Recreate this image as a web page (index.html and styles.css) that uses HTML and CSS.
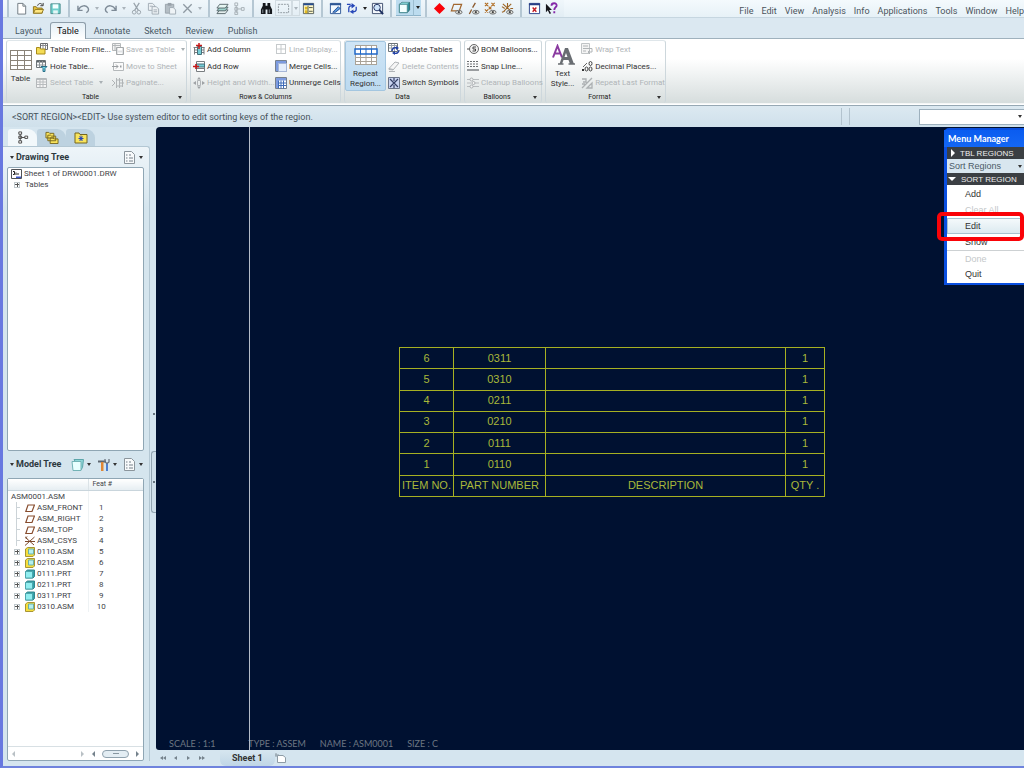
FILE: index.html
```
<!DOCTYPE html>
<html lang="en">
<head>
    <meta charset="UTF-8">
    <meta name="viewport" content="width=device-width, initial-scale=1.0">
    <title>DRW0001 - Drawing</title>
    <link rel="stylesheet" href="styles.css">
</head>
<body>
    <svg class="sprite">
        <!-- toolbar icons, 14x14 -->
        <symbol id="t-new" viewBox="0 0 14 14"><path d="M3 1.5h5.500l3 3v8.500H3z" fill="#fff" stroke="#6d7880"/><path d="M8.500 1.500v3h3" fill="none" stroke="#6d7880"/></symbol>
        <symbol id="t-open" viewBox="0 0 14 14"><path d="M1.500 12V5h3l1 1.500H11V12z" fill="#e8c23a" stroke="#8a7420"/><path d="M1.500 12l2-4h9l-2 4z" fill="#ffe680" stroke="#8a7420"/><path d="M6 4c1-3 4-3 5-1M12 1v3H9" fill="none" stroke="#333"/></symbol>
        <symbol id="t-save" viewBox="0 0 14 14"><path d="M2 2h10v10.500H2z" fill="#6fd0cc" stroke="#4b8b8e"/><path d="M4 2.500h6V7H4z" fill="#f4ffff"/><path d="M4.500 9h5v3.500h-5z" fill="#e5f6f6"/></symbol>
        <symbol id="t-undo" viewBox="0 0 14 14"><path d="M1 4v5h5M1.500 8.500C4 3 10 3 12 6.500c1 2 0 4-2 5" fill="none" stroke="#7d8a96" stroke-width="1.500"/></symbol>
        <symbol id="t-redo" viewBox="0 0 14 14"><path d="M13 4v5H8M12.500 8.500C10 3 4 3 2 6.500c-1 2 0 4 2 5" fill="none" stroke="#7d8a96" stroke-width="1.500"/></symbol>
        <symbol id="t-cut" viewBox="0 0 14 14"><path d="M4 1l5 8M10 1L5 9" stroke="#98a2aa" stroke-width="1.300"/><circle cx="4.500" cy="11" r="2" fill="none" stroke="#98a2aa"/><circle cx="9.500" cy="11" r="2" fill="none" stroke="#98a2aa"/></symbol>
        <symbol id="t-copy" viewBox="0 0 14 14"><path d="M1.500 1.500H6L8 3.500V9H1.500z" fill="#eef3f6" stroke="#a0abb3"/><path d="M5.500 5H10l2.500 2.500V13h-7z" fill="#eef3f6" stroke="#a0abb3"/><path d="M7 8.500h4M7 10.500h4M3 4.500h3" stroke="#a0abb3"/></symbol>
        <symbol id="t-paste" viewBox="0 0 14 14"><path d="M1.500 2.500h9V12h-9z" fill="#b4bec5" stroke="#98a2aa"/><path d="M4 1h4v3H4z" fill="#98a2aa"/><path d="M6 6h4l2.500 2.500V13H6z" fill="#eef3f6" stroke="#a0abb3"/></symbol>
        <symbol id="t-x" viewBox="0 0 14 14"><path d="M2.500 2.500l9 9M11.500 2.500l-9 9" stroke="#8e99a2" stroke-width="1.400"/></symbol>
        <symbol id="t-layers" viewBox="0 0 14 14"><path d="M4 8.500h9l-3 4H1z" fill="#e5eeee" stroke="#58676b"/><path d="M4 5.500h9l-3 4H1z" fill="#9ed4cd" stroke="#58676b"/><path d="M4 2.500h9l-3 4H1z" fill="#e5f6f2" stroke="#58676b"/></symbol>
        <symbol id="t-tree" viewBox="0 0 14 14"><path d="M2 1h3v3H2zM2 6h3v3H2zM2 10.500h3v3H2zM9 6h3v3H9zM3.500 4v8M5 7.500h4" fill="none" stroke="#a6b0b6"/></symbol>
        <symbol id="t-bino" viewBox="0 0 14 14"><path d="M3 1h3v3h2V1h3v3l2 4v5H8V8H6v5H1V8l2-4z" fill="#15181c"/><path d="M3 8v4M10 8v4" stroke="#8b949c"/></symbol>
        <symbol id="t-select" viewBox="0 0 14 14"><path d="M1.500 2.500h11v9h-11z" fill="none" stroke="#8d969d" stroke-dasharray="2 1"/></symbol>
        <symbol id="t-find" viewBox="0 0 14 14"><path d="M1.500 1.500h11v11h-11z" fill="#fff8c8" stroke="#57605c"/><path d="M1.500 2.500h11" stroke="#254c93" stroke-width="2"/><path d="M3 5h3v3H3zM3 9h3v3H3z" fill="#e0b920"/><path d="M7.500 6h4M7.500 10h4M6.500 4v8" stroke="#4d5347"/></symbol>
        <symbol id="t-repaint" viewBox="0 0 14 14"><path d="M1.500 1.500h11v11h-11z" fill="#f4faff" stroke="#2d5695"/><path d="M1 2.500h12" stroke="#2d5695" stroke-width="2"/><path d="M4 11l6-6 2 2-5 4z" fill="#5a9bdd" stroke="#254c93"/></symbol>
        <symbol id="t-refit" viewBox="0 0 14 14"><path d="M1 2.500h4M3 11V7c0-2 2-3 4-3M11 5v3c0 2-2 2.500-4 2.500" fill="none" stroke="#2747b8" stroke-width="1.400"/><path d="M6 1l4 3-4 3zM8 8l-4 2.500L8 13z" fill="#2747b8"/></symbol>
        <symbol id="t-zoom" viewBox="0 0 14 14"><path d="M1.500 1.500h11v11h-11z" fill="#f4f8fc" stroke="#3c4c6c"/><circle cx="6.500" cy="6" r="3.500" fill="#cfe5fb" stroke="#1d2f60"/><path d="M9 8.500l4 4.500" stroke="#1d2f60" stroke-width="2"/></symbol>
        <symbol id="t-cube" viewBox="0 0 14 14"><path d="M1.500 3.500l3-2h8v8l-2.500 3h-8.500z" fill="#2c8d98" stroke="#32686f"/><path d="M1.500 3.500h8.500v9H1.500z" fill="#f3ffff" stroke="#4b8e94"/><path d="M2 3l3-1.500h7L10 3z" fill="#9ae4e4"/></symbol>
        <symbol id="t-red" viewBox="0 0 14 14"><path d="M7 1l6 6-6 6-6-6z" fill="#fa0308"/></symbol>
        <symbol id="eye" viewBox="0 0 14 14"><ellipse cx="9.500" cy="11" rx="3.500" ry="2" fill="#e8e8e2" stroke="#66686a"/><circle cx="9.500" cy="11" r="1.200" fill="#444"/></symbol>
        <symbol id="t-plane" viewBox="0 0 14 14"><path d="M4 2.500h8.500L10 9.500H1.500z" fill="none" stroke="#a2672f" stroke-width="1.300"/><use href="#eye"/></symbol>
        <symbol id="t-axis" viewBox="0 0 14 14"><path d="M9 1L6 6M5 8l-2.500 5" stroke="#8c5a2d" stroke-width="1.400"/><use href="#eye"/></symbol>
        <symbol id="t-points" viewBox="0 0 14 14"><path d="M1 1l3.500 3.500M4.500 1L1 4.500M8 1l3.500 3.500M11.500 1L8 4.500M1 8l3.500 3.500M4.500 8L1 11.500M5 5l3 3M8 5L5 8" stroke="#b06c22" stroke-width="1.200"/><use href="#eye"/></symbol>
        <symbol id="t-csys" viewBox="0 0 14 14"><path d="M2 2l9 8M11 2l-8 8M7 1v5M1 5l3 2M10 7h3M1 11l3-1" stroke="#9b6425" stroke-width="1.200"/><use href="#eye"/></symbol>
        <symbol id="t-close" viewBox="0 0 14 14"><path d="M1.500 1.500h11v11h-11z" fill="#fff" stroke="#273f87"/><path d="M1 2.500h12" stroke="#273f87" stroke-width="2"/><path d="M5 6l4 4.500M9 6l-4 4.500" stroke="#c01a22" stroke-width="1.500"/></symbol>
        <symbol id="t-help" viewBox="0 0 14 14"><path d="M1 2v9l2-2 2 4 1.500-1-2-3.500h3z" fill="#16161c"/><path d="M7 4c0-3.500 6-3.500 5.500 0C12 6 10 6 10 8.500M10 10v2" fill="none" stroke="#8427a8" stroke-width="2"/></symbol>
        <!-- ribbon icons, 12x12 -->
        <symbol id="r-grid" viewBox="0 0 24 22"><path d="M1 1h22v20H1z" fill="#fff"/><path d="M1.500 1v20M8.500 1v20M15.500 1v20M22.500 1v20M1 1.500h22M1 6.500h22M1 11.500h22M1 16.500h22M1 20.500h22" stroke="#8a8378"/></symbol>
        <symbol id="r-file" viewBox="0 0 12 12"><path d="M4.500.5h7v6h-7z" fill="#fff" stroke="#6a6c70"/><path d="M5 2.500h6M7 1v5M9.500 1v5" stroke="#8a8c90"/><path d="M.5 4.500h3l1 1.500H9v5H.5z" fill="#f4dc55" stroke="#a98a18"/></symbol>
        <symbol id="r-hole" viewBox="0 0 12 12"><path d="M.5.5h9v7h-9z" fill="#fff" stroke="#6d7478"/><path d="M1 1.500h8" stroke="#5d6468" stroke-width="2"/><path d="M1 5h8M3.500 1v6M6.500 1v6" stroke="#8d9498"/><path d="M5 6.500h6L9 8.500v3H7v-3z" fill="#6fd5e8" stroke="#2b6f87"/></symbol>
        <symbol id="r-table-off" viewBox="0 0 12 12"><path d="M.5 1.500h10v9H.5z" fill="#f4f4f4" stroke="#b4b8ba"/><path d="M1 2.500h9M1 5h9M1 7.500h9M4 2v8M7 2v8" stroke="#b8bcbe"/></symbol>
        <symbol id="r-saveas" viewBox="0 0 12 12"><path d="M.5.5h8v7h-8z" fill="#f4f4f4" stroke="#b4b8ba"/><path d="M1 2.500h8M3 1v6" stroke="#b4b8ba"/><path d="M4.500 4.500h7v7h-7z" fill="#e0e2e4" stroke="#a4a8aa"/><path d="M6 5h4v2.500H6zM6 9.500h4V11H6z" fill="#fff"/></symbol>
        <symbol id="r-move" viewBox="0 0 12 12"><path d="M1.500 2.500h10v8h-10z" fill="#fafafa" stroke="#b4b8ba"/><path d="M0 6.500h6M4 4.500l2 2-2 2" fill="none" stroke="#999da0"/><path d="M8 6.500h1.500" stroke="#999da0" stroke-width="2"/></symbol>
        <symbol id="r-paginate" viewBox="0 0 12 12"><path d="M4.500 1v10M7.500 1v10M5 3h6M8 6h4M5 9h6M10.500 2v8M0 3l3 3-3 3" fill="none" stroke="#b0b4b6"/></symbol>
        <symbol id="r-addcol" viewBox="0 0 12 12"><path d="M.5 4.500h11M1 7h10M1 9.500h10M1.500 4v7.500M11 4v7.500" stroke="#787d80"/><path d="M4.500 3.500h4v8h-4z" fill="#77cdd6" stroke="#46707a"/><path d="M6 0v6M3 2.500h6" stroke="#c61a1a" stroke-width="1.500"/></symbol>
        <symbol id="r-addrow" viewBox="0 0 12 12"><path d="M3.500 1.500h8v10h-8zM4 8.500h8" fill="#fff" stroke="#787d80"/><path d="M3.500 4h8v3h-8z" fill="#77cdd6" stroke="#46707a"/><path d="M0 6.500h6M3 4v5" stroke="#c61a1a" stroke-width="1.600"/></symbol>
        <symbol id="r-size" viewBox="0 0 12 12"><path d="M4.500 3.500h3v5h-3z" fill="none" stroke="#b0b4b7"/><path d="M0 6l3-2v4zM12 6L9 4v4zM6 0l2 2.500H4zM6 12l2-2.500H4z" fill="#9ea2a5"/></symbol>
        <symbol id="r-line" viewBox="0 0 12 12"><path d="M1 1.500h10M1 6h10M1 10.500h10M1.500 1v10M6 1v10M10.500 1v10" stroke="#c6cacc"/></symbol>
        <symbol id="r-merge" viewBox="0 0 12 12"><path d="M.5.5h11v11H.5z" fill="#fff" stroke="#76808d"/><path d="M1 1h10v2.500H3.500V11H1z" fill="#7d9be0"/><path d="M3.500 3.500h8v8h-8z" fill="#e5eefb" stroke="#a6b6d7"/></symbol>
        <symbol id="r-unmerge" viewBox="0 0 12 12"><path d="M.5.5h11v11H.5z" fill="#fff" stroke="#76808d"/><path d="M1 1h10v2.500H3.500V11H1z" fill="#7d9be0"/><path d="M3.500 6h8M3.500 8.500h8M3.500 3.500v8M6 3.500v8M8.500 3.500v8" stroke="#3f6cb8"/></symbol>
        <symbol id="r-repeat" viewBox="0 0 24 22"><path d="M1 1h22v20H1z" fill="#fff"/><path d="M1.500 1v20M6.500 1v20M12 1v20M17.500 1v20M22.500 1v20M1 1.500h22M1 13.500h22M1 17.500h22M1 20.500h22" stroke="#a9a297"/><path d="M1 5h22v5H1z" fill="#fff" stroke="#2068c8" stroke-width="1.500"/><path d="M6.500 5v5M12 5v5M17.500 5v5" stroke="#2068c8"/></symbol>
        <symbol id="r-update" viewBox="0 0 12 12"><path d="M.5.500h9v8h-9z" fill="#fff" stroke="#6d7478"/><path d="M1 2.500h8M1 5h8M3.500 1v7M6.500 1v7" stroke="#9da4a8"/><path d="M4 8c0-3 3-4 5-3M11 7c0 3-3 4-5 3" fill="none" stroke="#2140a5" stroke-width="1.400"/><path d="M8 3l3 2-3 2zM7 8l-3 2 3 2z" fill="#2140a5"/></symbol>
        <symbol id="r-erase" viewBox="0 0 12 12"><path d="M1 8.500l6-6.500 4 1-6 7-4-.500zM1 8.500l4 1M1 11.500h6" fill="#f6f6f6" stroke="#b0b4b7"/></symbol>
        <symbol id="r-switch" viewBox="0 0 12 12"><path d="M.5.500h11v11H.5z" fill="#c9d4f0" stroke="#6b7588"/><path d="M2 2l8 8M10 2l-8 8M6 1v3M6 8v3" stroke="#343f65" stroke-width="1.200"/></symbol>
        <symbol id="r-bom" viewBox="0 0 12 12"><path d="M0 6h3" stroke="#444"/><circle cx="7" cy="6" r="4.500" fill="#f2f2f2" stroke="#666"/><path d="M9 4H6v2h2.500v2H5.500" fill="none" stroke="#444"/></symbol>
        <symbol id="r-snap" viewBox="0 0 12 12"><path d="M0 1.500h12M0 4h12M0 6.500h12" stroke="#6a6d70" stroke-dasharray="2 1"/><path d="M0 10h12" stroke="#9a9da0" stroke-width="2"/></symbol>
        <symbol id="r-clean" viewBox="0 0 12 12"><path d="M0 2.500h4M6 2.500h6M0 6h4M8 6h4M0 9.500h4M6 9.500h6" stroke="#b8bcbf"/><circle cx="4.500" cy="2.500" r="1.500" fill="#f4f4f4" stroke="#acb0b3"/><circle cx="6.500" cy="6" r="1.500" fill="#f4f4f4" stroke="#acb0b3"/><circle cx="4.500" cy="9.500" r="1.500" fill="#f4f4f4" stroke="#acb0b3"/></symbol>
        <symbol id="r-style" viewBox="0 0 24 22"><path d="M2 13.500L6.500 2 11 13.500M3.500 9.500h6" fill="none" stroke="#8a3ba0" stroke-width="2"/><path d="M14 4h3l6 16h-4l-1.500-4h-5L11 20H8.500zM13.500 13h3L15 9z" fill="#696d72"/><path d="M7 20h5.500M17.500 20H24" stroke="#696d72" stroke-width="1.500"/></symbol>
        <symbol id="r-wrap" viewBox="0 0 12 12"><path d="M.5.500h8v10h-8z" fill="#f4f4f4" stroke="#c0c4c6"/><path d="M2 3h5M2 5.500h9V9H7M9 7L7 9l2 2M2 8h3" fill="none" stroke="#b0b4b6"/></symbol>
        <symbol id="r-decimal" viewBox="0 0 12 12"><path d="M1 9h2v2H1z" fill="#333"/><ellipse cx="5.500" cy="9" rx="1.500" ry="2" fill="none" stroke="#444"/><ellipse cx="9.500" cy="9" rx="1.500" ry="2" fill="none" stroke="#444"/><ellipse cx="9.500" cy="3.500" rx="1.500" ry="2" fill="none" stroke="#444"/><path d="M2 7l4-4" stroke="#666"/></symbol>
        <symbol id="r-last" viewBox="0 0 12 12"><path d="M1 11L11 1M1 2h4v3H2M6 11l5-5v5zM1 7h3" fill="none" stroke="#acb0b2" stroke-width="1.300"/></symbol>
        <!-- tree icons -->
        <symbol id="p-tree" viewBox="0 0 12 14"><path d="M1.500 1h3v2.500h-3zM1.500 5.500h3V8h-3zM1.500 10.500h3V13h-3zM8 5.500h3V8H8zM3 3.500v7M4.500 7H8" fill="#fff" stroke="#444"/></symbol>
        <symbol id="p-folders" viewBox="0 0 14 14"><path d="M.5 1.500h3l1 1H9v5H.5zM2.500 4.500h3l1 1H11v5H2.500zM5 7.500h3l1 1h4.500v5H5z" fill="#f9e45c" stroke="#77661c"/></symbol>
        <symbol id="p-fav" viewBox="0 0 14 12"><path d="M1 1.500h4l1 1.500h7v8.500H1z" fill="#f9e45c" stroke="#77661c"/><path d="M7 4v5.500M4.500 7h5M5.500 5l3 4M8.500 5l-3 4" stroke="#2745b5"/></symbol>
        <symbol id="p-list" viewBox="0 0 13 13"><path d="M1.500.500h7l3 3v9h-10z" fill="#f8fafb" stroke="#8b959c"/><path d="M3 4h1.500M3 7h1.500M3 10h1.500M6 4h2M6 7h4M6 10h4" stroke="#74808a"/></symbol>
        <symbol id="p-show" viewBox="0 0 13 13"><path d="M3 1.500h9.500l-1 8-2 3z" fill="#8fd6d8" stroke="#5ba5aa"/><path d="M1 3.500h9v9H2z" fill="#e9ffff" stroke="#73b3b6"/></symbol>
        <symbol id="p-tools" viewBox="0 0 13 13"><path d="M1 2.500h8v2H1z" fill="#5d6670"/><path d="M4 4h2.500v9H4z" fill="#df8735"/><path d="M9 5h2v8H9z" fill="#4b7ed0"/><path d="M8 1v3l2 1.500L12 4V1" fill="none" stroke="#6b7480" stroke-width="1.300"/></symbol>
        <symbol id="p-drw" viewBox="0 0 11 10"><path d="M.5.500h10v9H.5z" fill="#fff" stroke="#505256"/><path d="M2 2.500h1.500v3H2M5 3.500v2.500M7 4v2" fill="none" stroke="#222"/><path d="M5 7.500h5v1.500H5z" fill="#3d56c8"/></symbol>
        <symbol id="p-plane" viewBox="0 0 10 10"><path d="M3 2h6.500L7 8.500H.8z" fill="#fff" stroke="#874c2d" stroke-width="1.200"/></symbol>
        <symbol id="p-csys" viewBox="0 0 10 10"><path d="M0 9.500L9.500 1M1 2l8 7M0 5.500h10M0 .5l2 2M2 .500l-2 2" stroke="#7c4a2d"/></symbol>
        <symbol id="p-asm" viewBox="0 0 10 10"><path d="M.5 2l2-1.500h7V8L8 9.500H.5z" fill="#f6df3c" stroke="#a89534"/><path d="M3.500 2h5v5h-5z" fill="#b4efee" stroke="#6bb0a8"/></symbol>
        <symbol id="p-prt" viewBox="0 0 10 10"><path d="M.5 2.500l2-1.500h7v6.500L8 9H.5z" fill="#2fa3ab" stroke="#37868c"/><path d="M.5 2.500h7V9h-7z" fill="#91eef0" stroke="#4da6ac"/></symbol>
        <symbol id="p-sheet" viewBox="0 0 12 10"><path d="M2.500 2.500H8l2.500 2v5h-8z" fill="#fff" stroke="#8e9ca6"/><path d="M1 0v4M0 2h4" stroke="#8e9ca6"/></symbol>
    </svg>

    <div class="app">
        <header class="topbar">
            <div class="toolbar">
                <div class="tool-group">
                    <button aria-label="New"><svg><use href="#t-new"/></svg></button>
                    <button aria-label="Open"><svg><use href="#t-open"/></svg></button>
                    <button aria-label="Save"><svg><use href="#t-save"/></svg></button>
                </div>
                <div class="tool-group">
                    <button class="wide" aria-label="Undo"><svg><use href="#t-undo"/></svg></button>
                    <button class="drop off" aria-label="Undo list"></button>
                    <button class="wide" aria-label="Redo"><svg><use href="#t-redo"/></svg></button>
                    <button class="drop off" aria-label="Redo list"></button>
                    <button aria-label="Cut"><svg><use href="#t-cut"/></svg></button>
                    <button aria-label="Copy"><svg><use href="#t-copy"/></svg></button>
                    <button aria-label="Paste"><svg><use href="#t-paste"/></svg></button>
                    <button aria-label="Delete"><svg><use href="#t-x"/></svg></button>
                    <button class="drop off" aria-label="Delete options"></button>
                </div>
                <div class="tool-group">
                    <button aria-label="Layers"><svg><use href="#t-layers"/></svg></button>
                    <button aria-label="Structure"><svg><use href="#t-tree"/></svg></button>
                </div>
                <div class="tool-group">
                    <button aria-label="Find"><svg><use href="#t-bino"/></svg></button>
                    <button class="boxed" aria-label="Select"><svg><use href="#t-select"/></svg></button>
                    <button class="drop off boxed" aria-label="Select options"></button>
                    <button aria-label="Search tool"><svg><use href="#t-find"/></svg></button>
                </div>
                <div class="tool-group">
                    <button aria-label="Repaint"><svg><use href="#t-repaint"/></svg></button>
                    <button aria-label="Regenerate"><svg><use href="#t-refit"/></svg></button>
                    <button class="drop" aria-label="Regenerate options"></button>
                    <button aria-label="Zoom"><svg><use href="#t-zoom"/></svg></button>
                </div>
                <div class="tool-group">
                    <button class="active" aria-label="Display style"><svg><use href="#t-cube"/></svg></button>
                    <button class="drop active" aria-label="Display style options"></button>
                </div>
                <div class="tool-group">
                    <button aria-label="Datum"><svg><use href="#t-red"/></svg></button>
                    <button aria-label="Planes"><svg><use href="#t-plane"/></svg></button>
                    <button aria-label="Axes"><svg><use href="#t-axis"/></svg></button>
                    <button aria-label="Points"><svg><use href="#t-points"/></svg></button>
                    <button aria-label="Coordinate systems"><svg><use href="#t-csys"/></svg></button>
                </div>
                <div class="tool-group">
                    <button aria-label="Close window"><svg><use href="#t-close"/></svg></button>
                    <button aria-label="Context help"><svg><use href="#t-help"/></svg></button>
                </div>
            </div>
            <nav class="menubar">
                <a href="#">File</a>
                <a href="#">Edit</a>
                <a href="#">View</a>
                <a href="#">Analysis</a>
                <a href="#">Info</a>
                <a href="#">Applications</a>
                <a href="#">Tools</a>
                <a href="#">Window</a>
                <a href="#">Help</a>
            </nav>
        </header>

        <nav class="tabs">
            <a href="#">Layout</a>
            <a href="#" class="current">Table</a>
            <a href="#">Annotate</a>
            <a href="#">Sketch</a>
            <a href="#">Review</a>
            <a href="#">Publish</a>
        </nav>

        <div class="ribbon">
            <section class="group g-table">
                <div class="group-body">
                    <button class="big"><svg><use href="#r-grid"/></svg>Table</button>
                    <div class="col">
                        <button><svg><use href="#r-file"/></svg>Table From File...</button>
                        <button><svg><use href="#r-hole"/></svg>Hole Table...</button>
                        <button disabled><svg><use href="#r-table-off"/></svg>Select Table<i class="arrow"></i></button>
                    </div>
                    <div class="col">
                        <button disabled><svg><use href="#r-saveas"/></svg>Save as Table<i class="arrow"></i></button>
                        <button disabled><svg><use href="#r-move"/></svg>Move to Sheet</button>
                        <button disabled><svg><use href="#r-paginate"/></svg>Paginate...</button>
                    </div>
                </div>
                <h2 class="more">Table<i class="arrow"></i></h2>
            </section>
            <section class="group g-rows">
                <div class="group-body">
                    <div class="col">
                        <button><svg><use href="#r-addcol"/></svg>Add Column</button>
                        <button><svg><use href="#r-addrow"/></svg>Add Row</button>
                        <button disabled><svg><use href="#r-size"/></svg>Height and Width...</button>
                    </div>
                    <div class="col">
                        <button disabled><svg><use href="#r-line"/></svg>Line Display...</button>
                        <button><svg><use href="#r-merge"/></svg>Merge Cells...</button>
                        <button><svg><use href="#r-unmerge"/></svg>Unmerge Cells</button>
                    </div>
                </div>
                <h2>Rows &amp; Columns</h2>
            </section>
            <section class="group g-data">
                <div class="group-body">
                    <button class="big pressed"><svg><use href="#r-repeat"/></svg>Repeat<br>Region...</button>
                    <div class="col">
                        <button><svg><use href="#r-update"/></svg>Update Tables</button>
                        <button disabled><svg><use href="#r-erase"/></svg>Delete Contents</button>
                        <button><svg><use href="#r-switch"/></svg>Switch Symbols</button>
                    </div>
                </div>
                <h2>Data</h2>
            </section>
            <section class="group g-balloons">
                <div class="group-body">
                    <div class="col">
                        <button><svg><use href="#r-bom"/></svg>BOM Balloons...</button>
                        <button><svg><use href="#r-snap"/></svg>Snap Line...</button>
                        <button disabled><svg><use href="#r-clean"/></svg>Cleanup Balloons</button>
                    </div>
                </div>
                <h2 class="more">Balloons<i class="arrow"></i></h2>
            </section>
            <section class="group g-format">
                <div class="group-body">
                    <button class="big"><svg><use href="#r-style"/></svg>Text<br>Style...</button>
                    <div class="col">
                        <button disabled><svg><use href="#r-wrap"/></svg>Wrap Text</button>
                        <button><svg><use href="#r-decimal"/></svg>Decimal Places...</button>
                        <button disabled><svg><use href="#r-last"/></svg>Repeat Last Format</button>
                    </div>
                </div>
                <h2 class="more">Format<i class="arrow"></i></h2>
            </section>
        </div>

        <div class="message-bar">
            <p>&lt;SORT REGION&gt;&lt;EDIT&gt; Use system editor to edit sorting keys of the region.</p>
            <span class="grip"></span>
            <div class="picker filter">
                <select aria-label="Selection filter"><option></option></select>
                <i class="arrow"></i>
            </div>
        </div>

        <div class="workspace">
            <aside class="sidebar">
                <div class="side-tabs">
                    <button class="current" aria-label="Model tree"><svg><use href="#p-tree"/></svg></button>
                    <button aria-label="Folder browser"><svg><use href="#p-folders"/></svg></button>
                    <button aria-label="Favorites"><svg><use href="#p-fav"/></svg></button>
                </div>
                <div class="side-panel">
                    <div class="panel-head">
                        <i class="arrow"></i>
                        <h3>Drawing Tree</h3>
                        <button aria-label="Tree settings"><svg><use href="#p-list"/></svg><i class="arrow"></i></button>
                    </div>
                    <div class="panel-box">
                        <ul class="drawing-tree">
                            <li><svg><use href="#p-drw"/></svg>Sheet 1 of DRW0001.DRW</li>
                            <li class="child"><i class="plus"></i>Tables</li>
                        </ul>
                    </div>
                    <div class="panel-head tall">
                        <i class="arrow"></i>
                        <h3>Model Tree</h3>
                        <button aria-label="Show"><svg><use href="#p-show"/></svg><i class="arrow"></i></button>
                        <button aria-label="Settings"><svg><use href="#p-tools"/></svg><i class="arrow"></i></button>
                        <button aria-label="Columns"><svg><use href="#p-list"/></svg><i class="arrow"></i></button>
                    </div>
                    <div class="panel-box">
                        <table class="model-tree">
                            <thead>
                                <tr><th></th><th>Feat #</th></tr>
                            </thead>
                            <tbody>
                                <tr><td>ASM0001.ASM</td><td></td></tr>
                                <tr><td><div class="node"><i class="leaf"></i><svg><use href="#p-plane"/></svg>ASM_FRONT</div></td><td>1</td></tr>
                                <tr><td><div class="node"><i class="leaf"></i><svg><use href="#p-plane"/></svg>ASM_RIGHT</div></td><td>2</td></tr>
                                <tr><td><div class="node"><i class="leaf"></i><svg><use href="#p-plane"/></svg>ASM_TOP</div></td><td>3</td></tr>
                                <tr><td><div class="node"><i class="leaf"></i><svg><use href="#p-csys"/></svg>ASM_CSYS</div></td><td>4</td></tr>
                                <tr><td><div class="node"><i class="plus"></i><svg><use href="#p-asm"/></svg>0110.ASM</div></td><td>5</td></tr>
                                <tr><td><div class="node"><i class="plus"></i><svg><use href="#p-asm"/></svg>0210.ASM</div></td><td>6</td></tr>
                                <tr><td><div class="node"><i class="plus"></i><svg><use href="#p-prt"/></svg>0111.PRT</div></td><td>7</td></tr>
                                <tr><td><div class="node"><i class="plus"></i><svg><use href="#p-prt"/></svg>0211.PRT</div></td><td>8</td></tr>
                                <tr><td><div class="node"><i class="plus"></i><svg><use href="#p-prt"/></svg>0311.PRT</div></td><td>9</td></tr>
                                <tr><td><div class="node"><i class="plus"></i><svg><use href="#p-asm"/></svg>0310.ASM</div></td><td>10</td></tr>
                            </tbody>
                        </table>
                        <div class="scroll-row">
                            <div class="scroll first"><i class="tri left"></i><i class="tri right"></i></div>
                            <div class="scroll"><i class="tri left"></i><span class="thumb"></span><i class="tri right"></i></div>
                        </div>
                    </div>
                </div>
            </aside>
            <div class="splitter"><span class="handle top"></span><span class="handle"></span></div>

            <main class="main">
                <div class="canvas">
                    <div class="sheet-edge"></div>
                    <table class="bom">
                        <colgroup><col class="c-item"><col class="c-part"><col><col class="c-qty"></colgroup>
                        <tbody>
                            <tr><td>6</td><td>0311</td><td></td><td>1</td></tr>
                            <tr><td>5</td><td>0310</td><td></td><td>1</td></tr>
                            <tr><td>4</td><td>0211</td><td></td><td>1</td></tr>
                            <tr><td>3</td><td>0210</td><td></td><td>1</td></tr>
                            <tr><td>2</td><td>0111</td><td></td><td>1</td></tr>
                            <tr><td>1</td><td>0110</td><td></td><td>1</td></tr>
                            <tr><th>ITEM NO.</th><th>PART NUMBER</th><th>DESCRIPTION</th><th>QTY .</th></tr>
                        </tbody>
                    </table>
                    <div class="sheet-info">
                        <span class="scale">SCALE : 1:1</span>
                        <span>TYPE : ASSEM</span>
                        <span>NAME : ASM0001</span>
                        <span>SIZE : C</span>
                    </div>

                    <div class="menu-manager">
                        <h4>Menu Manager</h4>
                        <div class="mm-head"><i class="tri right"></i>TBL REGIONS</div>
                        <div class="picker">
                            <select aria-label="Table regions"><option>Sort Regions</option></select>
                            <i class="arrow"></i>
                        </div>
                        <div class="mm-head"><i class="tri down"></i>SORT REGION</div>
                        <div class="mm-list">
                            <button>Add</button>
                            <button disabled>Clear All</button>
                            <button class="hover">Edit</button>
                            <button>Show</button>
                            <button class="ruled" disabled>Done</button>
                            <button>Quit</button>
                        </div>
                        <div class="callout"></div>
                    </div>
                </div>
                <div class="sheet-bar">
                    <button aria-label="First sheet"><i class="tri left"></i><i class="tri left"></i></button>
                    <button aria-label="Previous sheet"><i class="tri left"></i></button>
                    <button aria-label="Next sheet"><i class="tri right"></i></button>
                    <button aria-label="Last sheet"><i class="tri right"></i><i class="tri right"></i></button>
                    <a href="#" class="sheet-tab">Sheet 1</a>
                    <button aria-label="New sheet"><svg><use href="#p-sheet"/></svg></button>
                </div>
            </main>
        </div>
    </div>
</body>
</html>
```
FILE: styles.css
```
* {
    box-sizing: border-box;
}
body {
    margin: 0;
    height: 100vh;
    overflow: hidden;
    font-family: Roboto, "Liberation Sans", sans-serif;
    font-size: 8px;
    color: #333;
}
button {
    font: inherit;
    color: inherit;
    background: none;
    border: none;
    padding: 0;
    margin: 0;
}
a {
    color: inherit;
    text-decoration: none;
}
h2, h3, h4, p, ul {
    margin: 0;
    padding: 0;
}
.sprite {
    display: none;
}
.app {
    display: flex;
    flex-direction: column;
    height: 100%;
    border-left: 3px solid #6878e0;
    border-bottom: 2px solid #6f83dd;
    background: #d5e5ef;
}
.arrow {
    display: inline-block;
    flex: none;
    border: 2px solid transparent;
    border-top: 3px solid #333;
    border-bottom: none;
}
.tri {
    display: inline-block;
    flex: none;
    border: 3px solid transparent;
}
.tri.left {
    border-right-color: #75828c;
    border-left: none;
}
.tri.right {
    border-left-color: #75828c;
    border-right: none;
}
.picker {
    display: grid;
    align-items: center;
}
.picker select, .picker .arrow {
    grid-area: 1 / 1;
}
.picker .arrow {
    justify-self: end;
    margin-right: 2px;
    pointer-events: none;
}

/* top toolbar and menus */
.topbar {
    display: flex;
    justify-content: space-between;
    height: 18px;
    flex: none;
    background: linear-gradient(#f4fafd, #e7f1f7);
    border-bottom: 1px solid #c6d6e0;
}
.toolbar {
    display: flex;
    flex: none;
    padding-left: 4px;
}
.tool-group {
    display: flex;
    padding: 0 4px;
    border-left: 2px solid #b5c7d3;
    background: linear-gradient(#f0f7fb, #e2edf4);
}
.tool-group button {
    display: flex;
    align-items: center;
    justify-content: center;
    width: 17px;
    height: 16px;
}
.tool-group svg {
    width: 13px;
    height: 13px;
}
.tool-group .wide {
    width: 19px;
}
.tool-group .drop {
    width: 8px;
}
.drop::after {
    content: "";
    border: 2px solid transparent;
    border-top: 3px solid #222;
    border-bottom: none;
}
.drop.off::after {
    border-top-color: #aab4bb;
}
.tool-group .boxed {
    border: 1px solid #d2dce2;
}
.tool-group .active {
    background: #bcdcef;
    border-bottom: 1px solid #8eb4ca;
}
.tool-group .drop.active {
    border-left: 1px solid #9bbdd0;
}
.menubar {
    display: flex;
    gap: 8px;
    padding-top: 5px;
    font-size: 9px;
    line-height: 12px;
    color: #4a545c;
}

/* ribbon */
.tabs {
    display: flex;
    align-items: flex-end;
    flex: none;
    height: 21px;
    padding-left: 5px;
    font-size: 9px;
    line-height: 16px;
    color: #4a5a66;
    background: #dbe8f1;
    border-bottom: 1px solid #9fb1bd;
}
.tabs a {
    padding: 0 6px;
    margin-bottom: -1px;
    border: 1px solid transparent;
    border-bottom: none;
}
.tabs .current {
    margin: 0 1px -1px;
    color: #111;
    background: linear-gradient(#e4eff6, #fff);
    border-color: #8e9eaa;
    border-radius: 3px 3px 0 0;
}
.ribbon {
    display: flex;
    gap: 3px;
    flex: none;
    height: 67px;
    padding: 1px 3px 2px;
    background: linear-gradient(#fff 30%, #d6dddd 97%, #fff 98%);
    border-bottom: 1px solid #96a8b4;
}
.group {
    display: flex;
    flex-direction: column;
    border: 1px solid #cdd7dc;
    border-top-color: #dfe6ea;
    border-radius: 3px;
    border-bottom: none;
}
.group-body {
    display: flex;
    height: 50px;
}
.group h2 {
    position: relative;
    font-size: 7px;
    font-weight: normal;
    line-height: 12px;
    text-align: center;
    color: #222;
}
.group .more {
    padding-right: 12px;
}
.group h2 .arrow {
    position: absolute;
    right: 4px;
    top: 5px;
}
.g-table {
    width: 181px;
}
.g-rows {
    width: 151px;
}
.g-data {
    width: 117px;
}
.g-balloons {
    width: 78px;
}
.g-format {
    width: 121px;
}
.col {
    display: flex;
    flex-direction: column;
    padding-left: 2px;
    white-space: nowrap;
}
.g-table .col {
    width: 76px;
}
.g-rows .col {
    width: 82px;
}
.col button {
    display: flex;
    align-items: center;
    gap: 2px;
    height: 17px;
}
.col svg {
    flex: none;
    width: 12px;
    height: 12px;
}
.col .arrow {
    margin-left: 4px;
    border-top-color: #a9b0b4;
}
.ribbon button:disabled {
    color: #b0b5b8;
}
.big {
    display: block;
    text-align: center;
    line-height: 10px;
}
.big svg {
    display: block;
    width: 24px;
    height: 22px;
    margin: 0 auto 3px;
}
.g-table .big {
    width: 27px;
}
.g-data .big {
    width: 41px;
}
.g-format .big {
    width: 35px;
}
.pressed {
    background: linear-gradient(#cfe5f6, #bcdaf0);
    border: 1px solid #a3c6e0;
    border-radius: 2px;
}
.message-bar {
    display: flex;
    flex: none;
    align-items: center;
    height: 21px;
    padding-left: 9px;
    font-size: 9px;
    color: #46525b;
    background: linear-gradient(#dce9f1, #cfe0eb);
}
.message-bar p {
    flex: 1;
}
.grip {
    width: 9px;
    height: 17px;
    margin-right: 69px;
    border: solid #b3c3ce;
    border-width: 0 1px;
}
.filter {
    width: 105px;
}
.filter select {
    appearance: none;
    height: 16px;
    border: 1px solid #9db0bd;
    border-right: none;
    background: #fff;
}

/* side trees */
.workspace {
    display: flex;
    flex: 1;
    min-height: 0;
}
.sidebar {
    display: flex;
    flex-direction: column;
    width: 147px;
    padding: 2px 0 5px;
}
.side-tabs {
    display: flex;
    flex: none;
    height: 17px;
    padding-left: 5px;
}
.side-tabs button {
    display: flex;
    align-items: center;
    justify-content: center;
    width: 29px;
    background: #bdd2e0;
    border-radius: 3px 9px 0 0;
}
.side-tabs .current {
    background: #f2f8fb;
}
.side-tabs svg {
    width: 14px;
    height: 13px;
}
.side-panel {
    display: flex;
    flex-direction: column;
    flex: 1;
    padding: 0 5px 0 4px;
    background: linear-gradient(#eef5f9, #d5e5ee 10%, #d5e5ee);
    border-top: 1px solid #b3c7d3;
    border-right: 1px solid #b3c7d3;
    border-radius: 0 3px 0 0;
}
.panel-head {
    display: flex;
    align-items: center;
    gap: 4px;
    flex: none;
    height: 20px;
    padding: 0 1px 0 3px;
}
.panel-head.tall {
    height: 27px;
}
.panel-head h3 {
    flex: 1;
    margin-left: -2px;
    font-size: 9px;
    color: #2c3840;
}
.panel-head button {
    display: flex;
    align-items: center;
    gap: 3px;
    margin-left: 2px;
}
.panel-head svg {
    width: 13px;
    height: 13px;
}
.panel-box {
    display: flex;
    flex-direction: column;
    flex: 1 1 0;
    background: #fff;
    border: 1px solid #8fa6b4;
    border-radius: 2px;
    color: #3f4448;
}
.drawing-tree {
    list-style-type: none;
    padding: 0 3px;
    white-space: nowrap;
}
.drawing-tree li {
    display: flex;
    align-items: center;
    gap: 2px;
    height: 11px;
}
.drawing-tree svg {
    width: 11px;
    height: 10px;
}
.drawing-tree .child {
    padding-left: 3px;
    gap: 5px;
}
.plus {
    flex: none;
    width: 6px;
    height: 6px;
    border: 1px solid #c0c8cc;
    background: linear-gradient(#555, #555) center / 4px 1px no-repeat, linear-gradient(#555, #555) center / 1px 4px no-repeat, #fff;
}
.model-tree {
    width: 100%;
    table-layout: fixed;
    border-collapse: collapse;
    flex: none;
}
.model-tree th {
    height: 12px;
    padding: 0 0 0 4px;
    font-size: 7px;
    font-weight: normal;
    text-align: left;
    background: linear-gradient(#fff, #e6eef2);
    border-bottom: 1px solid #c9d5dc;
}
.model-tree th:first-child {
    width: 80px;
    border-right: 1px solid #dbe3e7;
}
.model-tree td {
    height: 11px;
    padding: 0 3px;
    line-height: 11px;
    white-space: nowrap;
}
.model-tree td:last-child {
    padding: 0 29px 0 0;
    text-align: center;
    border-left: 1px solid #eef2f4;
}
.node {
    display: flex;
    align-items: center;
    gap: 5px;
    height: 11px;
    padding-left: 3px;
}
.node svg {
    width: 10px;
    height: 10px;
    margin-right: -3px;
}
.leaf {
    width: 6px;
    height: 11px;
    background: linear-gradient(#ccd3d7, #ccd3d7) 2px 0 / 1px 11px no-repeat, linear-gradient(#ccd3d7, #ccd3d7) 2px 5px / 4px 1px no-repeat;
}
.scroll-row {
    display: flex;
    margin-top: auto;
    height: 14px;
    border-top: 1px solid #d8e0e4;
}
.scroll {
    display: flex;
    flex: 1;
    align-items: center;
    justify-content: space-between;
    padding: 0 4px;
}
.scroll.first {
    flex: none;
    width: 80px;
    opacity: 0.5;
}
.scroll .tri {
    border-width: 3px;
}
.thumb {
    width: 27px;
    height: 8px;
    border: 1px solid #8fa1ad;
    border-radius: 4px;
    background: linear-gradient(#8796a0, #8796a0) center / 6px 1px no-repeat, #e3edf3;
}
.splitter {
    display: flex;
    flex-direction: column;
    align-items: flex-end;
    width: 6px;
    flex: none;
    padding-top: 256px;
}
.handle {
    width: 5px;
    height: 62px;
    border: 1px solid #93a5b1;
    border-right: none;
    border-radius: 3px 0 0 3px;
    background: linear-gradient(#66747e, #66747e) center / 2px 2px no-repeat #cfdfe9;
}
.handle.top {
    border-color: transparent;
    background-color: transparent;
    margin-bottom: 6px;
}

/* drawing area */
.main {
    display: flex;
    flex-direction: column;
    flex: 1;
    min-width: 0;
}
.canvas {
    position: relative;
    display: flex;
    align-items: flex-end;
    flex: 1;
    overflow: hidden;
    background: #001131;
    border-radius: 4px 0 0 3px;
}
.sheet-edge {
    position: absolute;
    left: 93px;
    top: 0;
    bottom: 0;
    width: 1px;
    background: #b4bcc8;
}
.bom {
    position: absolute;
    left: 243px;
    top: 220px;
    width: 426px;
    height: 150px;
    table-layout: fixed;
    border-collapse: collapse;
    font-family: "Liberation Sans", Arial, sans-serif;
    font-size: 11px;
    line-height: 13px;
    color: #a9b83a;
}
.bom td, .bom th {
    padding: 0;
    font-weight: normal;
    text-align: center;
    white-space: nowrap;
    border: 1px solid #a6b022;
}
.c-item {
    width: 54px;
}
.c-part {
    width: 92px;
}
.c-qty {
    width: 39px;
}
.sheet-info {
    display: flex;
    gap: 14px;
    padding-left: 13px;
    font-family: Lato, sans-serif;
    font-size: 9px;
    line-height: 12px;
    color: #6c7682;
}
.sheet-info .scale {
    margin-right: 19px;
}
.sheet-bar {
    display: flex;
    align-items: center;
    flex: none;
    height: 16px;
}
.sheet-bar button {
    display: flex;
    justify-content: center;
    width: 13px;
}
.sheet-bar .tri {
    border-width: 2px 3px;
}
.sheet-bar svg {
    width: 12px;
    height: 10px;
}
.sheet-tab {
    padding: 0 12px;
    margin-left: 12px;
    font-size: 9px;
    font-weight: bold;
    line-height: 15px;
    background: linear-gradient(#d5e5ef, #c0d6e6);
    border-radius: 0 0 6px 6px;
}

/* floating menu manager */
.menu-manager {
    position: absolute;
    top: 1px;
    right: 0;
    width: 80px;
    padding: 2px 0 2px 3px;
    background: #0a4fe0;
    border-radius: 5px 0 0 0;
    font-family: "Liberation Sans", Arial, sans-serif;
    color: #333;
    white-space: nowrap;
}
.menu-manager h4 {
    margin-left: -3px;
    padding-left: 4px;
    font-family: Lato, sans-serif;
    font-size: 9px;
    line-height: 17px;
    color: #fff;
    background: linear-gradient(#0a5cf0, #1467f5);
}
.mm-head {
    display: flex;
    align-items: center;
    gap: 5px;
    height: 12px;
    padding-left: 4px;
    font-size: 8px;
    color: #eee;
    background: #3b3f43;
}
.mm-head .tri {
    border-width: 4px;
    border-left-color: #fff;
    border-right: none;
}
.mm-head .tri.down {
    margin: 4px 0 0 -3px;
    border: 4px solid transparent;
    border-top-color: #fff;
}
.menu-manager select {
    appearance: none;
    width: 100%;
    height: 14px;
    padding: 0 2px;
    border: none;
    font: 9px/14px "Liberation Sans", Arial, sans-serif;
    color: #4a5a66;
    background: #d8e6ef;
}
.mm-list {
    padding: 1px 0;
    background: #fff;
}
.mm-list button {
    display: block;
    width: 100%;
    height: 16px;
    padding-left: 18px;
    font-size: 9px;
    text-align: left;
}
.mm-list button:disabled {
    color: #c4c8ca;
}
.mm-list .hover {
    padding-left: 17px;
    background: linear-gradient(#f4f9fb, #dceaf0);
    border: 1px solid #a8c2cf;
}
.mm-list .ruled {
    border-top: 1px solid #cdd1d3;
}
.callout {
    position: absolute;
    left: -7px;
    right: 0;
    top: 84px;
    height: 29px;
    border: 4px solid #fa0308;
    border-radius: 5px;
}
```
